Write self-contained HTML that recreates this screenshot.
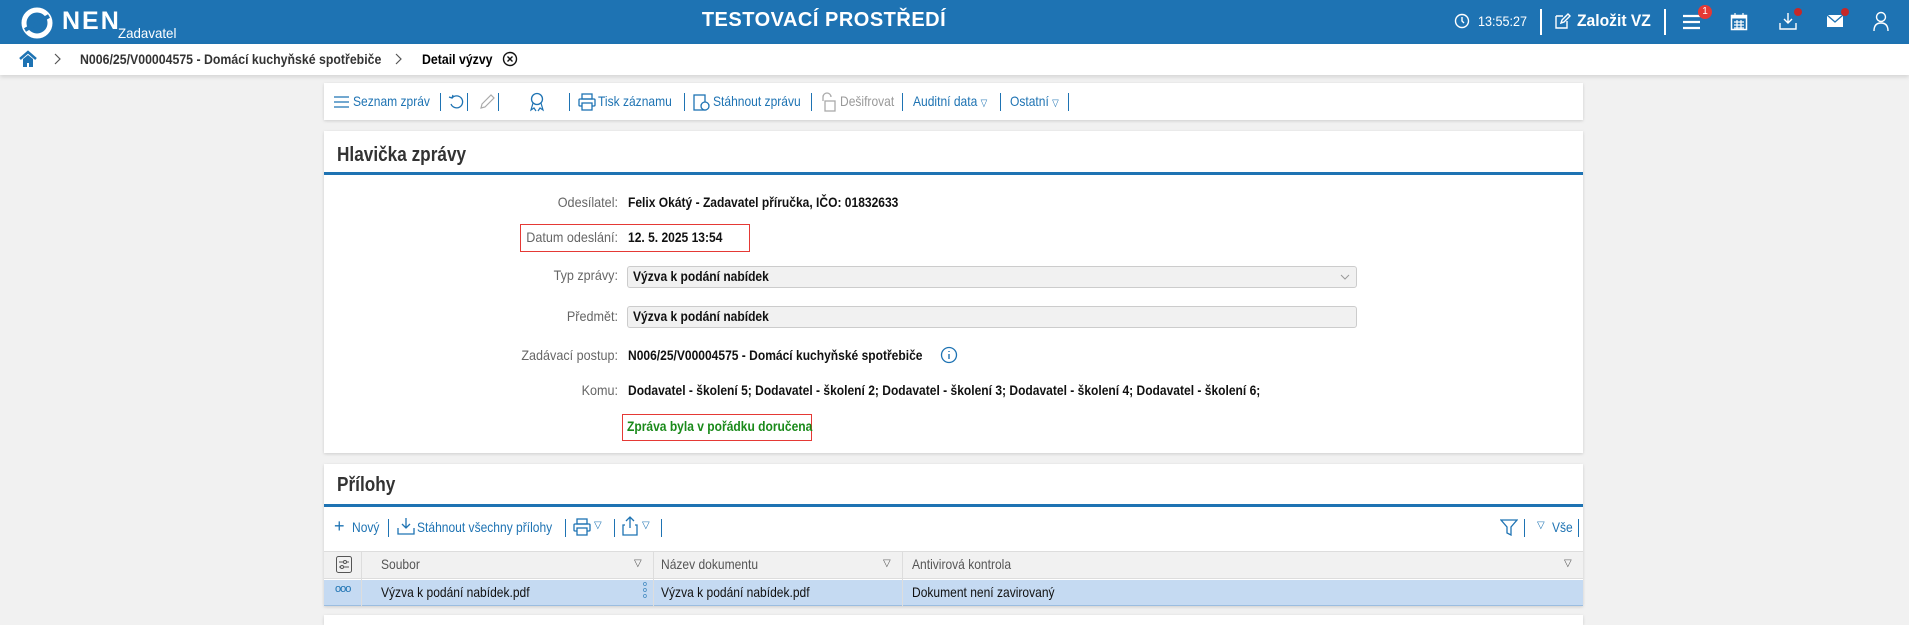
<!DOCTYPE html>
<html><head><meta charset="utf-8">
<style>
*{margin:0;padding:0;box-sizing:border-box}
body{width:1909px;height:619px;overflow:hidden;background:#f1f1f1;font-family:"Liberation Sans",sans-serif;font-size:14px;color:#111;position:relative}
.a{position:absolute;white-space:nowrap;transform-origin:0 50%}
.t{transform:scaleX(.86)}
.hdr{left:0;top:0;width:1909px;height:44px;background:#1e73b3}
.bc{left:0;top:44px;width:1909px;height:31px;background:#fff;box-shadow:0 2px 4px rgba(0,0,0,.12)}
.panel{background:#fff;box-shadow:0 1px 3px rgba(0,0,0,.15)}
.lnk{color:#1e73b3}
.sep{width:1px;height:18px;background:#1e73b3}
.lbl{color:#666;text-align:right;width:300px;transform-origin:100% 50%;transform:scaleX(.9)}
.val{font-weight:bold}
.w{color:#fff}
</style></head><body>
<div class="a hdr"></div>
<svg class="a" style="left:20px;top:6px" width="34" height="34" viewBox="0 0 34 34"><circle cx="17" cy="17" r="13" fill="none" stroke="#fff" stroke-width="5"/><path d="M5 24 L29 10" stroke="#1e73b3" stroke-width="4"/></svg>
<div class="a w" style="left:62px;top:7px;font-weight:bold;font-size:25px;letter-spacing:2px">NEN</div>
<div class="a w" style="left:118px;top:25px;font-size:14px;transform:scaleX(.95)">Zadavatel</div>
<div class="a w" style="left:824px;top:9px;transform:translateX(-50%);font-weight:bold;font-size:20px;letter-spacing:.5px">TESTOVACÍ PROSTŘEDÍ</div>
<svg class="a" style="left:1454px;top:13px" width="16" height="16" viewBox="0 0 16 16"><circle cx="8" cy="8" r="6.5" fill="none" stroke="#fff" stroke-width="1.4"/><path d="M8 4v4l2 2" stroke="#fff" stroke-width="1.4" fill="none"/></svg>
<div class="a w" style="left:1478px;top:13px;font-size:14px;transform:scaleX(.9)">13:55:27</div>
<div class="a" style="left:1540px;top:9px;width:2px;height:26px;background:#fff"></div>
<svg class="a" style="left:1553px;top:12px" width="18" height="18" viewBox="0 0 18 18"><path d="M3 4h7M3 4v12h11V9" stroke="#fff" stroke-width="1.4" fill="none"/><path d="M8 11l1-3 6-6 2 2-6 6z" stroke="#fff" stroke-width="1.4" fill="none"/></svg>
<div class="a w" style="left:1577px;top:11px;font-size:17px;font-weight:bold;transform:scaleX(.92)">Založit VZ</div>
<div class="a" style="left:1664px;top:9px;width:2px;height:26px;background:#fff"></div>
<svg class="a" style="left:1682px;top:13px" width="20" height="18"><path d="M1 3h17M1 9h17M1 15h17" stroke="#fff" stroke-width="2.2"/></svg>
<div class="a" style="left:1698px;top:5px;width:14px;height:14px;border-radius:7px;background:#e53935;color:#fff;font-size:10px;text-align:center;line-height:14px">1</div>
<svg class="a" style="left:1730px;top:12px" width="18" height="19" viewBox="0 0 18 19"><rect x="1.5" y="3.5" width="15" height="14" fill="none" stroke="#fff" stroke-width="1.5"/><rect x="1.5" y="3.5" width="15" height="3" fill="#fff"/><path d="M5 1v4M13 1v4M4 10h10M4 13h10M4 16h10M7 8v9M11 8v9" stroke="#fff" stroke-width="1.2"/></svg>
<svg class="a" style="left:1779px;top:12px" width="18" height="19" viewBox="0 0 18 19"><path d="M9 1v10M5 7l4 4 4-4M1 11v6h16v-6" stroke="#fff" stroke-width="1.4" fill="none"/></svg>
<div class="a" style="left:1794px;top:8px;width:8px;height:8px;border-radius:4px;background:#c62828"></div>
<svg class="a" style="left:1826px;top:14px" width="18" height="14"><rect x="1" y="1" width="16" height="12" fill="#fff"/><path d="M1 1l8 7 8-7" stroke="#1e73b3" stroke-width="1.3" fill="none"/></svg>
<div class="a" style="left:1841px;top:8px;width:8px;height:8px;border-radius:4px;background:#c62828"></div>
<svg class="a" style="left:1873px;top:11px" width="16" height="20"><circle cx="8" cy="6" r="4.5" fill="none" stroke="#fff" stroke-width="1.4"/><path d="M1 20c0-6 3-8 7-8s7 2 7 8" fill="none" stroke="#fff" stroke-width="1.4"/></svg>

<div class="a bc"></div>
<svg class="a" style="left:18px;top:50px" width="20" height="18" viewBox="0 0 20 18"><path d="M2 9L10 2l8 7" stroke="#1e73b3" stroke-width="2.5" fill="none"/><path d="M5 9v8h4v-4h2v4h4V9L10 5z" fill="#1e73b3"/></svg>
<svg class="a" style="left:54px;top:53px" width="8" height="12"><path d="M1 1l5 5-5 5" stroke="#555" stroke-width="1.2" fill="none"/></svg>
<div class="a" style="left:80px;top:51px;color:#333;font-weight:bold;font-size:14px;transform:scaleX(.88)">N006/25/V00004575 - Domácí kuchyňské spotřebiče</div>
<svg class="a" style="left:395px;top:53px" width="8" height="12"><path d="M1 1l5 5-5 5" stroke="#555" stroke-width="1.2" fill="none"/></svg>
<div class="a" style="left:422px;top:51px;color:#000;font-weight:bold;font-size:14px;transform:scaleX(.88)">Detail výzvy</div>
<svg class="a" style="left:502px;top:51px" width="16" height="16"><circle cx="8" cy="8" r="6.5" fill="none" stroke="#111" stroke-width="1.4"/><path d="M5.5 5.5l5 5M10.5 5.5l-5 5" stroke="#111" stroke-width="1.4"/></svg>

<div class="a panel" style="left:324px;top:83px;width:1259px;height:37px"></div>
<svg class="a" style="left:334px;top:96px" width="16" height="12"><path d="M0 1h15M0 6h15M0 11h15" stroke="#1e73b3" stroke-width="1.3"/></svg>
<div class="a lnk t" style="left:353px;top:93px">Seznam zpráv</div>
<div class="a sep" style="left:440px;top:93px"></div>
<svg class="a" style="left:448px;top:93px" width="18" height="18"><path d="M4 5A6 6 0 1 1 3 11" stroke="#1e73b3" stroke-width="1.3" fill="none"/><path d="M1 4l3 1 1-3" stroke="#1e73b3" stroke-width="1.3" fill="none"/></svg>
<div class="a sep" style="left:467px;top:93px"></div>
<svg class="a" style="left:478px;top:93px" width="18" height="18"><path d="M3 15l1-4 9-9 3 3-9 9z" stroke="#aaa" stroke-width="1.2" fill="none"/></svg>
<div class="a sep" style="left:498px;top:93px"></div>
<svg class="a" style="left:528px;top:92px" width="18" height="20"><circle cx="9" cy="7" r="5.5" fill="none" stroke="#1e73b3" stroke-width="1.3"/><path d="M5 11l-2 7 3-2 2 3M13 11l2 7-3-2-2 3" stroke="#1e73b3" stroke-width="1.2" fill="none"/></svg>
<div class="a sep" style="left:569px;top:93px"></div>
<svg class="a" style="left:578px;top:93px" width="18" height="18"><rect x="4" y="1" width="10" height="5" fill="none" stroke="#1e73b3" stroke-width="1.3"/><rect x="1" y="6" width="16" height="7" rx="1" fill="none" stroke="#1e73b3" stroke-width="1.3"/><rect x="4" y="10" width="10" height="7" fill="#fff" stroke="#1e73b3" stroke-width="1.3"/></svg>
<div class="a lnk t" style="left:598px;top:93px">Tisk záznamu</div>
<div class="a sep" style="left:684px;top:93px"></div>
<svg class="a" style="left:692px;top:92px" width="18" height="20"><rect x="2" y="3" width="11" height="15" fill="none" stroke="#1e73b3" stroke-width="1.3"/><circle cx="13" cy="14" r="4" fill="#fff" stroke="#1e73b3" stroke-width="1.3"/></svg>
<div class="a lnk t" style="left:713px;top:93px">Stáhnout zprávu</div>
<div class="a sep" style="left:811px;top:93px"></div>
<svg class="a" style="left:820px;top:92px" width="16" height="20"><path d="M3 9V5a4 4 0 0 1 8 0" stroke="#aaa" stroke-width="1.3" fill="none"/><rect x="5" y="9" width="10" height="10" fill="none" stroke="#aaa" stroke-width="1.3"/></svg>
<div class="a t" style="left:840px;top:93px;color:#999">Dešifrovat</div>
<div class="a sep" style="left:902px;top:93px"></div>
<div class="a lnk t" style="left:913px;top:93px">Auditní data <span style="font-size:10px">▽</span></div>
<div class="a sep" style="left:1000px;top:93px"></div>
<div class="a lnk t" style="left:1010px;top:93px">Ostatní <span style="font-size:10px">▽</span></div>
<div class="a sep" style="left:1068px;top:93px"></div>

<div class="a panel" style="left:324px;top:131px;width:1259px;height:322px"></div>
<div class="a t" style="left:337px;top:144px;font-size:20px;font-weight:bold;color:#333">Hlavička zprávy</div>
<div class="a" style="left:324px;top:172px;width:1259px;height:3px;background:#1e73b3"></div>

<div class="a lbl" style="left:318px;top:194px">Odesílatel:</div>
<div class="a val t" style="left:628px;top:194px">Felix Okátý - Zadavatel příručka, IČO: 01832633</div>
<div class="a" style="left:520px;top:224px;width:230px;height:28px;border:1px solid #e53935"></div>
<div class="a lbl" style="left:318px;top:229px">Datum odeslání:</div>
<div class="a val t" style="left:628px;top:229px">12. 5. 2025 13:54</div>
<div class="a lbl" style="left:318px;top:267px">Typ zprávy:</div>
<div class="a" style="left:627px;top:266px;width:730px;height:22px;background:#f1f1f1;border:1px solid #ccc;border-radius:3px"></div>
<div class="a val t" style="left:633px;top:268px">Výzva k podání nabídek</div>
<svg class="a" style="left:1340px;top:273px" width="10" height="8"><path d="M1 2l4 4 4-4" stroke="#999" fill="none"/></svg>
<div class="a lbl" style="left:318px;top:308px">Předmět:</div>
<div class="a" style="left:627px;top:306px;width:730px;height:22px;background:#f1f1f1;border:1px solid #ccc;border-radius:3px"></div>
<div class="a val t" style="left:633px;top:308px">Výzva k podání nabídek</div>
<div class="a lbl" style="left:318px;top:347px">Zadávací postup:</div>
<div class="a val t" style="left:628px;top:347px">N006/25/V00004575 - Domácí kuchyňské spotřebiče</div>
<svg class="a" style="left:940px;top:346px" width="18" height="18"><circle cx="9" cy="9" r="7.5" fill="none" stroke="#1e73b3" stroke-width="1.3"/><path d="M9 8v5M9 5v1" stroke="#1e73b3" stroke-width="1.4"/></svg>
<div class="a lbl" style="left:318px;top:382px">Komu:</div>
<div class="a val t" style="left:628px;top:382px">Dodavatel - školení 5; Dodavatel - školení 2; Dodavatel - školení 3; Dodavatel - školení 4; Dodavatel - školení 6;</div>
<div class="a" style="left:622px;top:414px;width:190px;height:27px;border:1px solid #e53935"></div>
<div class="a t" style="left:627px;top:418px;color:#1a8a1a;font-weight:bold">Zpráva byla v pořádku doručena</div>

<div class="a panel" style="left:324px;top:464px;width:1259px;height:142px"></div>
<div class="a t" style="left:337px;top:474px;font-size:20px;font-weight:bold;color:#333">Přílohy</div>
<div class="a" style="left:324px;top:504px;width:1259px;height:3px;background:#1e73b3"></div>
<div class="a lnk" style="left:334px;top:517px;font-size:18px;line-height:18px">+</div>
<div class="a lnk t" style="left:352px;top:519px">Nový</div>
<div class="a sep" style="left:388px;top:519px"></div>
<svg class="a" style="left:397px;top:517px" width="18" height="18"><path d="M9 1v10M5 7l4 4 4-4M1 11v6h16v-6" stroke="#1e73b3" stroke-width="1.3" fill="none"/></svg>
<div class="a lnk t" style="left:417px;top:519px">Stáhnout všechny přílohy</div>
<div class="a sep" style="left:565px;top:519px"></div>
<svg class="a" style="left:573px;top:518px" width="18" height="18"><rect x="4" y="1" width="10" height="5" fill="none" stroke="#1e73b3" stroke-width="1.3"/><rect x="1" y="6" width="16" height="7" rx="1" fill="none" stroke="#1e73b3" stroke-width="1.3"/><rect x="4" y="10" width="10" height="7" fill="#fff" stroke="#1e73b3" stroke-width="1.3"/></svg>
<div class="a lnk" style="left:594px;top:520px;font-size:10px">▽</div>
<div class="a sep" style="left:614px;top:519px"></div>
<svg class="a" style="left:622px;top:516px" width="16" height="20"><path d="M8 1v11M4 5l4-4 4 4M3 9H1v10h14V9h-2" stroke="#1e73b3" stroke-width="1.3" fill="none"/></svg>
<div class="a lnk" style="left:642px;top:520px;font-size:10px">▽</div>
<div class="a sep" style="left:661px;top:519px"></div>
<svg class="a" style="left:1500px;top:518px" width="18" height="18"><path d="M1 2h16l-6 7v8l-4-2V9z" stroke="#1e73b3" stroke-width="1.3" fill="none"/></svg>
<div class="a sep" style="left:1524px;top:519px"></div>
<div class="a lnk" style="left:1537px;top:520px;font-size:10px">▽</div>
<div class="a lnk t" style="left:1552px;top:519px">Vše</div>
<div class="a sep" style="left:1578px;top:519px"></div>

<div class="a" style="left:324px;top:551px;width:1259px;height:28px;background:#f1f1f1;border-top:1px solid #ddd;border-bottom:1px solid #ddd"></div>
<div class="a" style="left:361px;top:551px;width:1px;height:55px;background:#ddd"></div>
<div class="a" style="left:653px;top:551px;width:1px;height:55px;background:#ddd"></div>
<div class="a" style="left:902px;top:551px;width:1px;height:55px;background:#ddd"></div>
<svg class="a" style="left:336px;top:556px" width="16" height="17"><rect x=".5" y=".5" width="15" height="16" rx="2" fill="none" stroke="#555"/><path d="M3 6h10M3 11h10" stroke="#555"/><circle cx="9" cy="6" r="1.5" fill="#fff" stroke="#555"/><circle cx="6" cy="11" r="1.5" fill="#fff" stroke="#555"/></svg>
<div class="a t" style="left:381px;top:556px;color:#555">Soubor</div>
<div class="a" style="left:634px;top:558px;color:#555;font-size:10px">▽</div>
<div class="a t" style="left:661px;top:556px;color:#555">Název dokumentu</div>
<div class="a" style="left:883px;top:558px;color:#555;font-size:10px">▽</div>
<div class="a t" style="left:912px;top:556px;color:#555">Antivirová kontrola</div>
<div class="a" style="left:1564px;top:558px;color:#555;font-size:10px">▽</div>
<div class="a" style="left:324px;top:580px;width:1259px;height:26px;background:#c5daf2;border-bottom:1px solid #9bbde0"></div>
<div class="a" style="left:361px;top:580px;width:1px;height:26px;background:#ddd"></div>
<div class="a" style="left:653px;top:580px;width:1px;height:26px;background:#ddd"></div>
<div class="a" style="left:902px;top:580px;width:1px;height:26px;background:#ddd"></div>
<div class="a lnk" style="left:335px;top:583px;font-size:11px;letter-spacing:-1px">ooo</div>
<div class="a t" style="left:381px;top:584px">Výzva k podání nabídek.pdf</div>
<div class="a lnk" style="left:643px;top:582px;font-size:7px;line-height:6px;white-space:normal;width:6px">o<br>o<br>o</div>
<div class="a t" style="left:661px;top:584px">Výzva k podání nabídek.pdf</div>
<div class="a t" style="left:912px;top:584px">Dokument není zavirovaný</div>
<div class="a panel" style="left:324px;top:615px;width:1259px;height:10px"></div>
</body></html>
